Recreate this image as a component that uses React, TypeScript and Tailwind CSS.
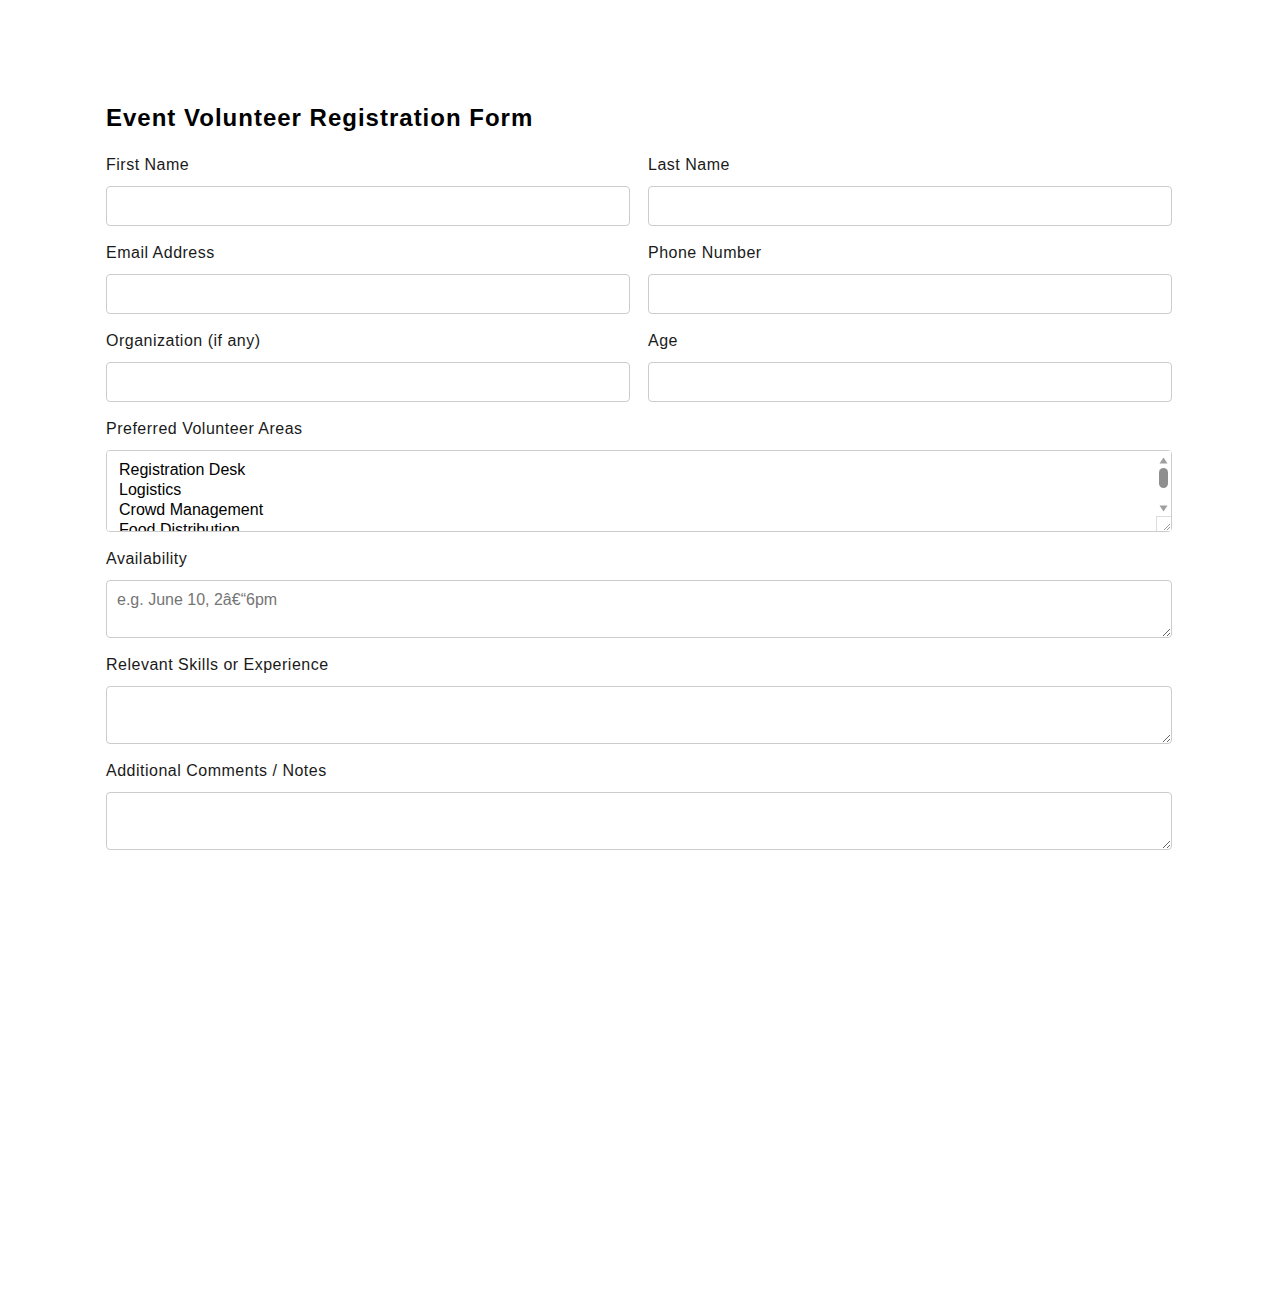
import React from 'react'

const inputCls =
  'block w-full h-[40px] rounded-[4px] border border-[#cccccc] bg-white px-[10px] text-[16px] outline-none'
const areaCls =
  'block w-full h-[58px] rounded-[4px] border border-[#cccccc] bg-white px-[10px] py-[10px] text-[16px] leading-[18px] outline-none resize-y placeholder:text-[#757575]'
const labelCls =
  'block pt-[1px] text-[16px] leading-[23px] mb-[10px] text-[#1a1a1a] tracking-[0.5px]'

function Field({ label, id }: { label: string; id: string }) {
  return (
    <div className="mb-[14px]">
      <label htmlFor={id} className={labelCls}>
        {label}
      </label>
      <input id={id} type="text" className={inputCls} />
    </div>
  )
}

// classic listbox scrollbar with arrows and a resize grip in the corner
function ListScrollbar() {
  return (
    <div className="pointer-events-none absolute right-[1px] top-[1px] bottom-[1px] flex w-[15px] flex-col items-center bg-white">
      <svg width="9" height="7" viewBox="0 0 9 7" className="mt-[6px]">
        <path d="M4.5 0.5 L8.5 6.5 L0.5 6.5 Z" fill="#9e9e9e" />
      </svg>
      <div className="mt-[4px] h-[20px] w-[9px] rounded-full bg-[#8f8f8f]" />
      <svg width="9" height="7" viewBox="0 0 9 7" className="mt-[17px]">
        <path d="M0.5 0.5 L8.5 0.5 L4.5 6.5 Z" fill="#9e9e9e" />
      </svg>
      <div className="mt-auto flex h-[15px] w-[15px] items-end justify-end border-t border-l border-[#dddddd] bg-white">
        <svg width="10" height="10" viewBox="0 0 10 10">
          <path d="M9 3 L3 9 M9 6 L6 9" stroke="#9a9a9a" strokeWidth="1" />
        </svg>
      </div>
    </div>
  )
}

export default function App() {
  const areas = [
    'Registration Desk',
    'Logistics',
    'Crowd Management',
    'Food Distribution',
    'First Aid',
    'Clean-up Crew',
  ]

  return (
    <div className="min-h-[1300px] bg-white font-['Liberation_Sans',Arial,sans-serif] text-[#1a1a1a]">
      <form className="mx-auto w-[1066px] pt-[103px]">
        <h1 className="mb-[19px] text-[24px] leading-[30px] font-bold tracking-[1px] text-black">
          Event Volunteer Registration Form
        </h1>

        <div className="grid grid-cols-2 gap-x-[18px]">
          <Field label="First Name" id="firstName" />
          <Field label="Last Name" id="lastName" />
          <Field label="Email Address" id="email" />
          <Field label="Phone Number" id="phone" />
          <Field label="Organization (if any)" id="org" />
          <Field label="Age" id="age" />
        </div>

        <div className="mb-[14px]">
          <label htmlFor="areas" className={labelCls}>
            Preferred Volunteer Areas
          </label>
          <div className="relative">
            <select
              id="areas"
              multiple
              className="block w-full h-[82px] rounded-[4px] border border-[#cccccc] bg-white px-[12px] pt-[9px] pb-[7px] text-[16px] text-black outline-none"
            >
              {areas.map((a) => (
                <option key={a} value={a} className="py-[1px] leading-[18px]">
                  {a}
                </option>
              ))}
            </select>
            <ListScrollbar />
          </div>
        </div>

        <div className="mb-[14px]">
          <label htmlFor="availability" className={labelCls}>
            Availability
          </label>
          <textarea id="availability" placeholder="e.g. June 10, 2â€“6pm" className={areaCls} />
        </div>

        <div className="mb-[14px]">
          <label htmlFor="skills" className={labelCls}>
            Relevant Skills or Experience
          </label>
          <textarea id="skills" className={areaCls} />
        </div>

        <div className="mb-[14px]">
          <label htmlFor="notes" className={labelCls}>
            Additional Comments / Notes
          </label>
          <textarea id="notes" className={areaCls} />
        </div>
      </form>
    </div>
  )
}
